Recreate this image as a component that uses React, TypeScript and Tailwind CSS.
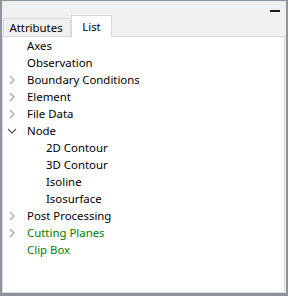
import React from "react";

type Item = { label: string; level: number; arrow?: "right" | "down"; green?: boolean };

const items: Item[] = [
  { label: "Axes", level: 0 },
  { label: "Observation", level: 0 },
  { label: "Boundary Conditions", level: 0, arrow: "right" },
  { label: "Element", level: 0, arrow: "right" },
  { label: "File Data", level: 0, arrow: "right" },
  { label: "Node", level: 0, arrow: "down" },
  { label: "2D Contour", level: 1 },
  { label: "3D Contour", level: 1 },
  { label: "Isoline", level: 1 },
  { label: "Isosurface", level: 1 },
  { label: "Post Processing", level: 0, arrow: "right" },
  { label: "Cutting Planes", level: 0, arrow: "right", green: true },
  { label: "Clip Box", level: 0, green: true },
];

function Arrow({ dir }: { dir: "right" | "down" }) {
  if (dir === "down") {
    return (
      <svg width="10" height="10" viewBox="0 0 10 10" className="block">
        <polyline points="1,3 5,7 9,3" fill="none" stroke="#5c5c5c" strokeWidth="1.3" />
      </svg>
    );
  }
  return (
    <svg width="10" height="10" viewBox="0 0 10 10" className="block">
      <polyline points="3,1 7,5 3,9" fill="none" stroke="#a8a8a8" strokeWidth="1.3" />
    </svg>
  );
}

export default function App() {
  return (
    <div
      className="flex h-[296px] w-[288px] flex-col border-b-[3px] border-l-2 border-r-2 border-t border-[#8f949c] bg-[#f0f0f0] text-[11.4px] text-black"
      style={{ fontFamily: '"Noto Sans", "Segoe UI", sans-serif' }}
    >
      <div className="flex h-[13px] items-start justify-end pr-[6px] pt-[9px]">
        <div className="h-[2px] w-[10px] bg-[#1a1a1a]" />
      </div>
      <div className="flex h-[22px] items-end pl-[1px]">
        <div className="flex h-[18px] w-[68px] items-center justify-center border border-b-0 border-[#d9d9d9] bg-[#f0f0f0] pr-[2px] leading-none">
          Attributes
        </div>
        <div className="relative z-10 -mb-px flex h-[22px] w-[41px] items-center justify-center border border-b-0 border-[#d9d9d9] bg-white leading-none">
          List
        </div>
      </div>
      <div className="mr-px flex-1 border border-[#d9d9d9] bg-white">
        {items.map((it) => (
          <div
            key={it.label}
            className={`flex h-[17px] items-center leading-none ${it.green ? "text-[#008000]" : "text-black"}`}
          >
            <div className="flex w-[24px] justify-start pl-[4px]">
              {it.arrow ? <Arrow dir={it.arrow} /> : null}
            </div>
            <span className={it.level === 1 ? "pl-[19px]" : ""}>{it.label}</span>
          </div>
        ))}
      </div>
    </div>
  );
}
